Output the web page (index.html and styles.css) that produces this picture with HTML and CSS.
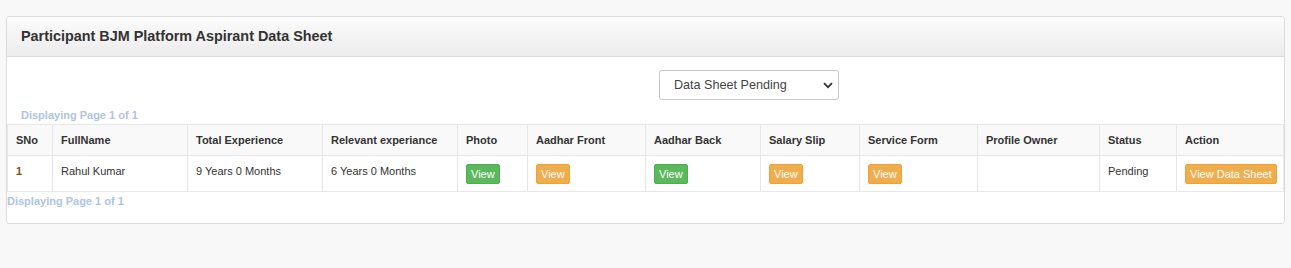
FILE: index.html
```html
<!DOCTYPE html>
<html>
<head>
<meta charset="utf-8">
<link rel="stylesheet" href="styles.css">
</head>
<body>
<div class="panel">
  <div class="panel-heading">Participant BJM Platform Aspirant Data Sheet</div>
  <div class="panel-body">
    <div class="filter-row">
      <div></div>
      <div class="filter-col">
        <div class="select-wrap">
          <select class="form-select">
            <option>Data Sheet Pending</option>
          </select>
          <svg class="chev" width="10" height="7" viewBox="0 0 10 7"><path d="M1 1.2 L5 5.2 L9 1.2" fill="none" stroke="#333" stroke-width="1.8"/></svg>
        </div>
      </div>
    </div>
    <div class="paging paging-top">Displaying Page 1 of 1</div>
    <table class="grid">
      <colgroup>
        <col class="c1"><col class="c2"><col class="c3"><col class="c4"><col class="c5"><col class="c6">
        <col class="c7"><col class="c8"><col class="c9"><col class="c10"><col class="c11"><col class="c12">
      </colgroup>
      <thead>
        <tr>
          <th>SNo</th><th>FullName</th><th>Total Experience</th><th>Relevant experiance</th><th>Photo</th><th>Aadhar Front</th><th>Aadhar Back</th><th>Salary Slip</th><th>Service Form</th><th>Profile Owner</th><th>Status</th><th>Action</th>
        </tr>
      </thead>
      <tbody>
        <tr>
          <td class="sno">1</td>
          <td>Rahul Kumar</td>
          <td>9 Years 0 Months</td>
          <td>6 Years 0 Months</td>
          <td><span class="btn btn-success">View</span></td>
          <td><span class="btn btn-warning">View</span></td>
          <td><span class="btn btn-success">View</span></td>
          <td><span class="btn btn-warning">View</span></td>
          <td><span class="btn btn-warning">View</span></td>
          <td></td>
          <td>Pending</td>
          <td><span class="btn btn-warning">View Data Sheet</span></td>
        </tr>
      </tbody>
    </table>
    <div class="paging paging-bottom">Displaying Page 1 of 1</div>
  </div>
</div>
</body>
</html>
```
FILE: styles.css
```css
html, body {
  margin: 0;
  padding: 0;
  background: #f8f8f8;
  font-family: "Liberation Sans", Arial, sans-serif;
  color: #333;
}
body {
  padding: 16px 6px 0 6px;
  width: 1279px;
}
.panel {
  background: #fff;
  border: 1px solid #dcdcdc;
  border-radius: 3px;
}
.panel-heading {
  background: linear-gradient(to bottom, #fbfbfb 0%, #ececec 100%);
  border-bottom: 1px solid #dadada;
  padding: 10px 14px;
  font-size: 14.4px;
  font-weight: bold;
  line-height: 19px;
  color: #333;
  border-radius: 3px 3px 0 0;
}
.panel-body {
  padding: 13px 0 15px 0;
}
.filter-row {
  display: grid;
  grid-template-columns: 638px 1fr;
}
.filter-col {
  padding-left: 14px;
}
.select-wrap {
  position: relative;
  width: 180px;
}
.form-select {
  appearance: none;
  -webkit-appearance: none;
  width: 180px;
  height: 30px;
  border: 1px solid #c8c8c8;
  border-radius: 3px;
  background: #fff;
  padding: 0 14px;
  font-family: "Liberation Sans", Arial, sans-serif;
  font-size: 12.6px;
  color: #444;
  display: block;
}
.chev {
  position: absolute;
  right: 6px;
  top: 12px;
  pointer-events: none;
}
.paging {
  font-size: 11px;
  font-weight: bold;
  color: #afc4e2;
  line-height: 13px;
}
.paging-top {
  padding: 9px 0 2px 14px;
}
.paging-bottom {
  padding: 3px 0 0 0;
}
.grid {
  width: 1276px;
  border-collapse: collapse;
  table-layout: fixed;
  font-size: 11px;
}
.c1 { width: 45px; }
.c2 { width: 135px; }
.c3 { width: 135px; }
.c4 { width: 135px; }
.c5 { width: 70px; }
.c6 { width: 118px; }
.c7 { width: 115px; }
.c8 { width: 99px; }
.c9 { width: 118px; }
.c10 { width: 122px; }
.c11 { width: 77px; }
.c12 { width: 107px; }
.grid th, .grid td {
  border: 1px solid #e7e7e7;
  padding: 8px 8px;
  text-align: left;
  vertical-align: top;
  white-space: nowrap;
}
.grid th {
  background: #f9f9f9;
  font-weight: bold;
  line-height: 14px;
  color: #333;
}
.grid td {
  line-height: 14px;
  padding-bottom: 7px;
  color: #333;
}
.grid td.sno {
  color: #83501a;
  font-weight: bold;
}
.btn {
  display: inline-block;
  vertical-align: top;
  font-size: 11px;
  line-height: 16px;
  padding: 1px 4px;
  border: 1px solid transparent;
  border-radius: 2px;
  color: #fff;
  white-space: nowrap;
}
.btn-success {
  background: #5cb85c;
  border-color: #4cae4c;
}
.btn-warning {
  background: #f0ad4e;
  border-color: #eea236;
}
```
